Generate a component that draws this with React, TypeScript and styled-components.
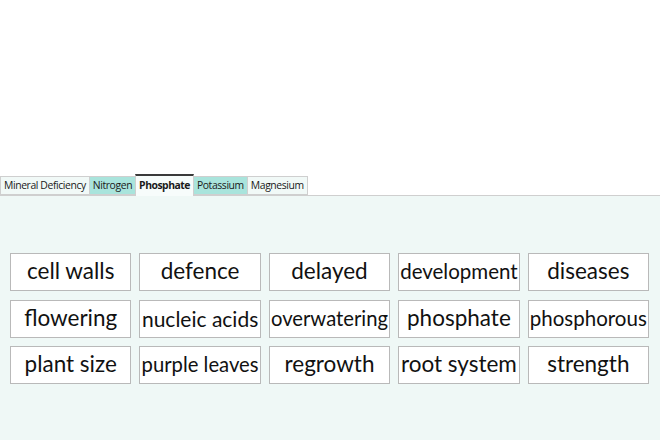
import React, { useLayoutEffect, useRef, useState } from 'react';
import styled, { createGlobalStyle } from 'styled-components';

const GlobalStyle = createGlobalStyle`
  html, body {
    margin: 0;
    padding: 0;
    background: #ffffff;
  }
  #root {
    height: 440px;
  }
`;

const Page = styled.div`
  height: 440px;
  display: flex;
  flex-direction: column;
  padding-top: 174px;
  box-sizing: border-box;
`;

const TabBar = styled.div`
  display: flex;
  align-items: flex-end;
  height: 21px;
  position: relative;
  z-index: 1;
`;

const Tab = styled.div<{ $active?: boolean; $tint?: boolean }>`
  font-family: 'Open Sans', 'Noto Sans', sans-serif;
  font-size: 10.4px;
  font-weight: ${(p) => (p.$active ? 700 : 400)};
  letter-spacing: ${(p) => (p.$active ? '-0.5px' : '-0.4px')};
  color: #1a1a1a;
  height: ${(p) => (p.$active ? '22px' : '19px')};
  line-height: ${(p) => (p.$active ? '19px' : '17px')};
  padding: 0 3px;
  box-sizing: border-box;
  background: ${(p) => (p.$active ? '#f7fcfb' : p.$tint ? '#a9e4dc' : '#f1f9f7')};
  border: 1px solid #cfcfcf;
  border-top: ${(p) => (p.$active ? '2px solid #3a3a3a' : '1px solid #cfcfcf')};
  border-bottom: ${(p) => (p.$active ? 'none' : '1px solid #cfcfcf')};
  margin-left: -1px;
  margin-bottom: ${(p) => (p.$active ? '-1px' : '0')};
  white-space: nowrap;

  &:first-child {
    margin-left: 0;
  }
`;

const Panel = styled.div`
  flex: 1;
  background: #eff8f6;
  border-top: 1px solid #cfcfcf;
  padding: 57px 11px 0 10px;
`;

const WordGrid = styled.div`
  display: grid;
  grid-template-columns: repeat(5, 1fr);
  grid-auto-rows: 38px;
  column-gap: 8px;
  row-gap: 8.5px;
`;

const WordBox = styled.div`
  background: #ffffff;
  border: 1px solid #b9b9b9;
  box-sizing: border-box;
  display: flex;
  align-items: center;
  justify-content: center;
  overflow: hidden;
  font-family: Lato, 'Open Sans', sans-serif;
  color: #111111;
  white-space: nowrap;
  padding: 0 1px;
`;

const WordText = styled.span`
  display: inline-block;
  line-height: 1;
  padding-bottom: 1px;
`;

const words = [
  'cell walls', 'defence', 'delayed', 'development', 'diseases',
  'flowering', 'nucleic acids', 'overwatering', 'phosphate', 'phosphorous',
  'plant size', 'purple leaves', 'regrowth', 'root system', 'strength',
];

const tabs = [
  { label: 'Mineral Deficiency' },
  { label: 'Nitrogen', tint: true },
  { label: 'Phosphate', active: true },
  { label: 'Potassium', tint: true },
  { label: 'Magnesium' },
];

const FitWord: React.FC<{ text: string }> = ({ text }) => {
  const boxRef = useRef<HTMLDivElement>(null);
  const textRef = useRef<HTMLSpanElement>(null);
  const [size, setSize] = useState(22.5);

  useLayoutEffect(() => {
    const box = boxRef.current;
    const span = textRef.current;
    if (!box || !span) return;
    const fit = () => {
      let s = 22.5;
      span.style.fontSize = s + 'px';
      const avail = box.clientWidth - 2;
      while (span.offsetWidth > avail && s > 8) {
        s -= 0.25;
        span.style.fontSize = s + 'px';
      }
      setSize(s);
    };
    fit();
    if (document.fonts) document.fonts.ready.then(fit);
  }, [text]);

  return (
    <WordBox ref={boxRef}>
      <WordText ref={textRef} style={{ fontSize: size + 'px' }}>
        {text}
      </WordText>
    </WordBox>
  );
};

export default function App() {
  return (
    <>
      <GlobalStyle />
      <Page>
        <TabBar>
          {tabs.map((t) => (
            <Tab key={t.label} $active={t.active} $tint={t.tint}>
              {t.label}
            </Tab>
          ))}
        </TabBar>
        <Panel>
          <WordGrid>
            {words.map((w) => (
              <FitWord key={w} text={w} />
            ))}
          </WordGrid>
        </Panel>
      </Page>
    </>
  );
}
